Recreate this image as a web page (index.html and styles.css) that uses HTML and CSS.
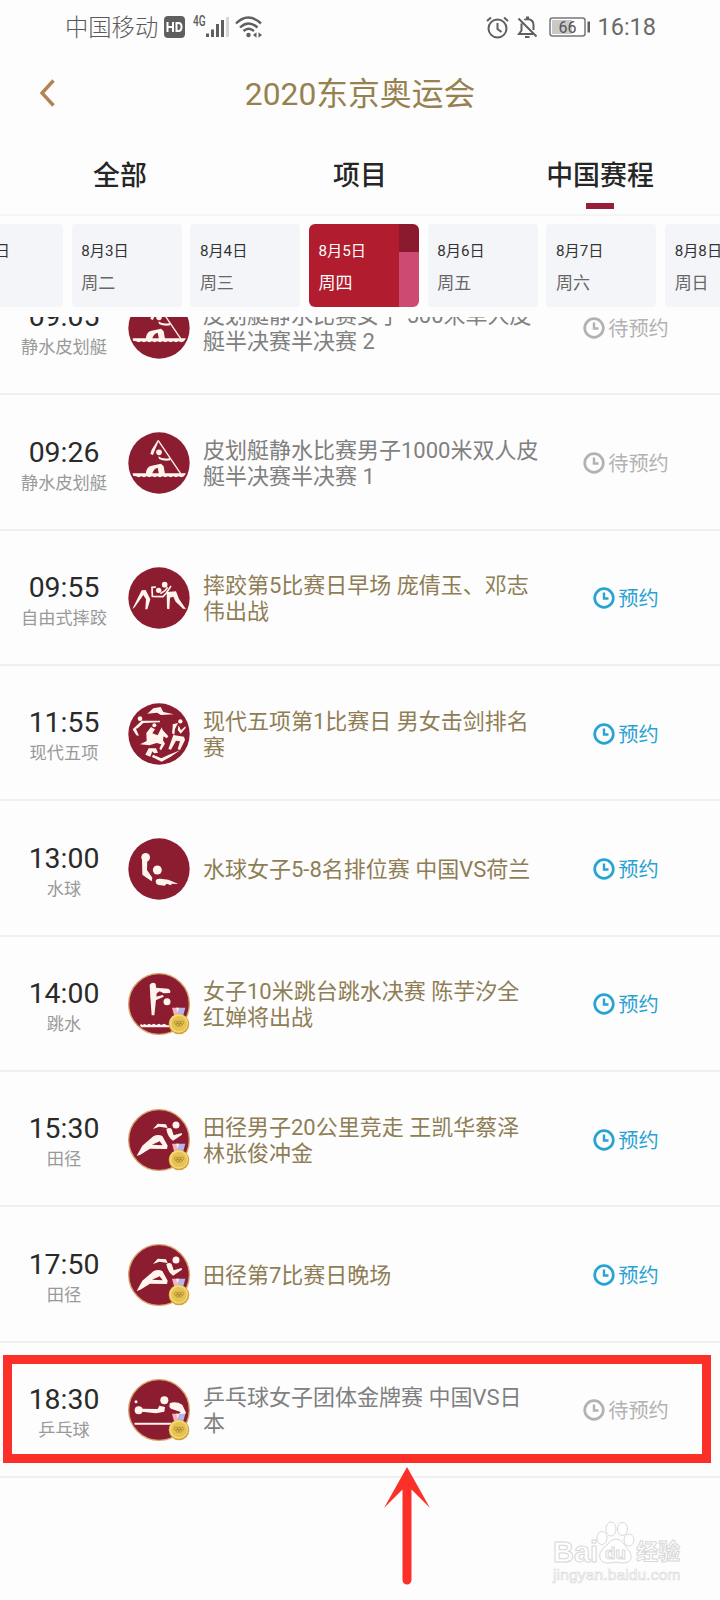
FILE: index.html
```html
<!DOCTYPE html>
<html lang="zh-CN">
<head>
<meta charset="utf-8">
<title>2020东京奥运会</title>
<link rel="stylesheet" href="styles.css">
</head>
<body>
<svg class="defs" width="0" height="0">
  <symbol id="clock" viewBox="0 0 22 22">
    <circle cx="11" cy="11" r="9.3" fill="none" stroke="currentColor" stroke-width="2.7"/>
    <path d="M11 5.5v6h4.500" fill="none" stroke="currentColor" stroke-width="2.400"/>
  </symbol>
  <symbol id="medal" viewBox="0 0 66 84">
    <path d="M12 2h22v22H18z" fill="#f2b3c0"/>
    <path d="M34 2h18l-6 22H28z" fill="#b3b8ea"/>
    <path d="M24 2h10l-6 14z" fill="#fbeef2"/>
    <circle cx="33" cy="51" r="31" fill="#d3a43c"/>
    <circle cx="32" cy="49" r="28" fill="#f3d978"/>
    <circle cx="33" cy="50" r="23" fill="#e6c253"/>
    <g fill="none" stroke="#a98630" stroke-width="2.2"><circle cx="24" cy="47" r="5"/><circle cx="33" cy="47" r="5"/><circle cx="42" cy="47" r="5"/><circle cx="29" cy="53" r="5"/><circle cx="37" cy="53" r="5"/></g>
  </symbol>
  <symbol id="canoe" viewBox="383 35 186 186">
    <circle cx="476" cy="128" r="92" fill="#8c1c2f"/>
    <path d="M474 61l67 99" stroke="#fff4ee" stroke-width="4"/>
    <path d="M476 60l-11 26-7 18-8-3 4-13 18-28z"/>
    <circle cx="476" cy="96" r="8.5"/>
    <path d="M474 108q14 10 34 5l2 7q-20 3-34-4z"/>
    <path d="M436 162q2-24 18-26l28-6 8 8 4 24h-18l-4-20q-12 2-17 20z"/>
    <path d="M397 159h160l-6 9-8 3-8-3-8 3-8-3-8 3-8-3-8 3-8-3-8 3-8-3-8 3-8-3-8 3-8-3-8 3-8-3-8 3-8-3-9-2z"/>
  </symbol>
  <symbol id="wrestling" viewBox="383 441 186 186">
    <circle cx="476" cy="534" r="92" fill="#8c1c2f"/>
    <path d="M396 567l28-56 12-1 14 28-9 30h-6l2-30-8-13-26 37z"/>
    <path d="M499 516l28-2 9 23 21 31-9-2-22-21-7-15-10 3-2 35-7-2z"/>
    <circle cx="493" cy="494" r="8.5"/><circle cx="475" cy="511" r="8"/>
    <path d="M467 501l-12 1 1 27 32 1 10-11 14-21M480 521l14-9 8-10" fill="none" stroke="#fff4ee" stroke-width="5"/>
  </symbol>
  <symbol id="pentathlon" viewBox="53 67 186 186">
    <circle cx="146" cy="160" r="92" fill="#8c1c2f"/>
    <path d="M111 99l18-16 22-4 8 15 32 7-39 2-12-7z"/>
    <circle cx="89" cy="114" r="7"/>
    <path d="M94 120h55v5l-50 2-15 14-7 4 9 20-8-1-11-18z"/>
    <circle cx="132" cy="134" r="6"/>
    <path d="M108 157l14-18 12 7-8 12 16 6 12-24 3 8 17 19-5 6-9-6-2 12 6 10-12 20-5-5 6-13-14-4-22 7-28-3 20-10z"/>
    <circle cx="210" cy="122" r="6.5"/>
    <path d="M187 131l16-4-9 18-2 17-7-4 2-18zM205 134l7 15 13-12 1 5-15 17-9-11zM189 163l32 5 3 10-15 30-7-2 7-24-12-2-15 27-8-2z"/>
    <path d="M115 203h22l6 13-12 2-5-6-6 16-15-6zM128 222l25 11 21-10 35-14-29 20-26 14-29-14z"/>
  </symbol>
  <symbol id="polo" viewBox="53 473 186 186">
    <circle cx="146" cy="566" r="92" fill="#8c1c2f"/>
    <circle cx="106" cy="531" r="13"/><circle cx="141" cy="569" r="13.5"/>
    <path d="M95 536l16 1-1 32 16 23-2 11-28-20z"/>
    <path d="M136 602q2-8 14-7l24 3 30 13-20-1-2 5-13-5-6 6-18-2q-9-2-9-12z"/>
  </symbol>
  <symbol id="diving" viewBox="53 68 186 186">
    <circle cx="146" cy="161" r="91" fill="#8c1c2f" stroke="#d9a26c" stroke-width="4"/>
    <circle cx="170" cy="154" r="10.5"/>
    <path d="M118 103q9-10 18-2l3 29-7 65h-8l-4-55z"/>
    <path d="M136 112l38 3q9 5 5 13l-19 1-12-6-12 8zM136 139l22-5 2 5-24 11z"/>
    <path d="M89 226l3-6 4 4 7-3 5 3 10-4 4 4 9-4 6 4 10-4 5 4 10-4 8 5h8v6H94z"/>
  </symbol>
  <symbol id="running" viewBox="53 71 186 186">
    <circle cx="146" cy="164" r="91" fill="#8c1c2f" stroke="#d9a26c" stroke-width="4"/>
    <circle cx="197" cy="119" r="10.5"/>
    <path d="M128 131l14-16 25 2 5 11-25-4z"/>
    <path d="M168 131q9-6 16 0l6 19 24-7 1 5-27 18q-16-10-20-35z"/>
    <path fill-rule="evenodd" d="M79 212l17-31 34-29q14-6 26 0l16 29-2 10-51-1-29 18zM125 178l32 2-9-12z"/>
  </symbol>
  <symbol id="pingpong" viewBox="53 477 186 186">
    <circle cx="146" cy="570" r="91" fill="#8c1c2f" stroke="#d9a26c" stroke-width="4"/>
    <circle cx="77" cy="545" r="4.5"/><circle cx="85" cy="571" r="12"/><circle cx="162" cy="541" r="12"/>
    <path d="M95 566l47 1 5-10 17 4-2 14-25 5-42-5z"/>
    <path d="M179 549q18-6 37 5l11 24-5 8-19-1 8-9-29-10q-8-5-3-17z"/>
    <path d="M72 608h112v6H73z"/>
  </symbol>
</svg>

<div class="screen">
  <header class="status">
    <div class="status-left">
      <span>中国移动</span>
      <svg class="hd" width="21" height="22" viewBox="0 0 21 22"><rect width="21" height="22" rx="4" fill="#5f5f5f"/><path d="M3.5 6v10M9 6v10M3.5 11H9M12.5 6v10M12.5 7h2q3 0 3 4t-3 4h-2" fill="none" stroke="#fff" stroke-width="2"/></svg>
      <span class="net">4G</span>
      <svg class="signal" width="24" height="20" viewBox="0 0 24 20"><g fill="#5f5f5f"><rect x="0" y="15.500" width="3" height="3.500"/><rect x="5" y="11.500" width="3" height="7.500"/><rect x="10" y="6" width="3" height="13"/><rect x="15" y="2" width="3" height="17"/></g><rect x="20" y="-1" width="3" height="20" fill="#d6d6d6"/></svg>
      <svg class="wifi" width="28" height="24" viewBox="0 0 28 24"><g fill="none" stroke="#5f5f5f" stroke-width="2.400"><path d="M1 8.500q12-12 25 0M5 12.500q8.500-8 17.500 0M8.500 16q5-4.500 10.500 0"/></g><circle cx="13.500" cy="20" r="2.200" fill="#5f5f5f"/><path d="M18 20l3.500-2.800v5.600zM27 20l-3.500-2.800v5.600z" fill="#5f5f5f"/></svg>
    </div>
    <div class="status-right">
      <svg width="23" height="23" viewBox="0 0 23 23" fill="none" stroke="#5f5f5f" stroke-width="2"><circle cx="11.500" cy="12.500" r="9"/><path d="M11.500 7v6l4 3M1 5l4-3.500M22 5l-4-3.500"/></svg>
      <svg class="bell" width="21" height="23" viewBox="0 0 21 23" fill="none" stroke="#5f5f5f" stroke-width="2"><path d="M1.500 2.500l18 18M4.500 7.500v7L2 18h14M7.500 4.200Q8 3 10.500 3 16.500 3.500 16.500 9v5M9 1.500h3M8 21h4.500"/></svg>
      <svg class="battery" width="42" height="20" viewBox="0 0 42 20"><rect x="1" y="1" width="35" height="18" rx="2.500" fill="#fff" stroke="#777" stroke-width="1.500"/><rect x="3" y="3" width="20" height="14" fill="#c9c9c9"/><rect x="38.500" y="4.500" width="2.500" height="11" fill="#5f5f5f"/><text x="18.500" y="15.500" text-anchor="middle" class="battery-text">66</text></svg>
      <span class="now">16:18</span>
    </div>
  </header>

  <div class="titlebar">
    <svg class="back" width="16" height="28" viewBox="0 0 16 28"><path d="M14.500 1.500L3 14l11.500 12.500" fill="none" stroke="#b08350" stroke-width="3.400"/></svg>
    <h1>2020东京奥运会</h1>
  </div>

  <nav class="tabs"><span>全部</span><span>项目</span><span class="current">中国赛程</span></nav>

  <div class="dates">
    <div class="date"><b>8月2日</b><i>周一</i></div>
    <div class="date"><b>8月3日</b><i>周二</i></div>
    <div class="date"><b>8月4日</b><i>周三</i></div>
    <div class="date selected"><b>8月5日</b><i>周四</i></div>
    <div class="date"><b>8月6日</b><i>周五</i></div>
    <div class="date"><b>8月7日</b><i>周六</i></div>
    <div class="date"><b>8月8日</b><i>周日</i></div>
  </div>

  <main class="list">
    <div class="rows">
      <section class="row wait"><div class="when"><time>09:05</time><small>静水皮划艇</small></div><div class="badge"><svg class="sport"><use href="#canoe"/></svg></div><p>皮划艇静水比赛女子 500米单人皮<br>艇半决赛半决赛 2</p><div class="action"><svg class="clock"><use href="#clock"/></svg>待预约</div></section>
      <section class="row wait"><div class="when"><time>09:26</time><small>静水皮划艇</small></div><div class="badge"><svg class="sport"><use href="#canoe"/></svg></div><p>皮划艇静水比赛男子1000米双人皮<br>艇半决赛半决赛 1</p><div class="action"><svg class="clock"><use href="#clock"/></svg>待预约</div></section>
      <section class="row"><div class="when"><time>09:55</time><small>自由式摔跤</small></div><div class="badge"><svg class="sport"><use href="#wrestling"/></svg></div><p>摔跤第5比赛日早场 庞倩玉、邓志<br>伟出战</p><div class="action"><svg class="clock"><use href="#clock"/></svg>预约</div></section>
      <section class="row"><div class="when"><time>11:55</time><small>现代五项</small></div><div class="badge"><svg class="sport"><use href="#pentathlon"/></svg></div><p>现代五项第1比赛日 男女击剑排名<br>赛</p><div class="action"><svg class="clock"><use href="#clock"/></svg>预约</div></section>
      <section class="row"><div class="when"><time>13:00</time><small>水球</small></div><div class="badge"><svg class="sport"><use href="#polo"/></svg></div><p>水球女子5-8名排位赛 中国VS荷兰</p><div class="action"><svg class="clock"><use href="#clock"/></svg>预约</div></section>
      <section class="row"><div class="when"><time>14:00</time><small>跳水</small></div><div class="badge"><svg class="sport"><use href="#diving"/></svg><svg class="medal"><use href="#medal"/></svg></div><p>女子10米跳台跳水决赛 陈芋汐全<br>红婵将出战</p><div class="action"><svg class="clock"><use href="#clock"/></svg>预约</div></section>
      <section class="row"><div class="when"><time>15:30</time><small>田径</small></div><div class="badge"><svg class="sport"><use href="#running"/></svg><svg class="medal"><use href="#medal"/></svg></div><p>田径男子20公里竞走 王凯华蔡泽<br>林张俊冲金</p><div class="action"><svg class="clock"><use href="#clock"/></svg>预约</div></section>
      <section class="row"><div class="when"><time>17:50</time><small>田径</small></div><div class="badge"><svg class="sport"><use href="#running"/></svg><svg class="medal"><use href="#medal"/></svg></div><p>田径第7比赛日晚场</p><div class="action"><svg class="clock"><use href="#clock"/></svg>预约</div></section>
      <section class="row wait"><div class="when"><time>18:30</time><small>乒乓球</small></div><div class="badge"><svg class="sport"><use href="#pingpong"/></svg><svg class="medal"><use href="#medal"/></svg></div><p>乒乓球女子团体金牌赛 中国VS日<br>本</p><div class="action"><svg class="clock"><use href="#clock"/></svg>待预约</div></section>
    </div>
  </main>

  <div class="frame"></div>
  <svg class="arrow" width="48" height="120" viewBox="0 0 48 120"><path d="M24 0L47 41 28.500 22.500V113a4.500 4.500 0 0 1-9 0V22.500L1 41z" fill="#fa3029"/></svg>
  <div class="watermark">
    <div class="mark-top"><span class="bai">Bai</span><svg width="40" height="44" viewBox="0 0 40 44" fill="#fff" stroke="#d8d8d8"><ellipse cx="6" cy="17" rx="5" ry="6.500"/><ellipse cx="15" cy="8" rx="5" ry="7"/><ellipse cx="26.500" cy="8" rx="5" ry="6.500"/><ellipse cx="33" cy="19" rx="5" ry="6"/><path d="M20 18q5 0 8 5t6 8q4 10-6 11-4 0-8-1-4 1-9 1-9-1-7-10 2-5 7-8 4-6 9-6z"/><text x="19.500" y="38" text-anchor="middle" class="du">du</text></svg><span class="jingyan">经验</span></div>
    <div class="mark-url">jingyan.baidu.com</div>
  </div>
</div>
</body>
</html>
```
FILE: styles.css
```css
* { box-sizing: border-box; }
body { margin: 0; background: #fdfdfd; font-family: Roboto, "Noto Sans CJK SC", sans-serif; }
.defs { position: absolute; }
.screen { position: relative; width: 720px; height: 1600px; overflow: hidden; display: flex; flex-direction: column; }

.status { height: 54px; padding: 0 64px 0 65px; display: flex; justify-content: space-between; color: #5a5a5a; font-size: 23.300px; font-weight: 300; line-height: 54px; }
.status-left, .status-right { display: flex; align-items: center; }
.status-left > span:first-child { padding-top: 2px; }
.hd { margin-left: 6px; }
.net { margin-left: 8px; font-size: 14px; line-height: 14px; font-weight: 500; transform: scaleX(.72); transform-origin: left; margin-top: -13px; }
.signal { margin-left: -5px; overflow: visible; margin-top: 2px; }
.wifi { margin-left: 5px; }
.status-right { position: relative; }
.bell { margin-left: 8px; }
.battery { margin-left: 11px; }
.battery-text { font-size: 16px; font-weight: 400; fill: #555; }
.now { margin-left: 6px; font-size: 23.500px; font-weight: 400; color: #6a6a6a; }

.titlebar { height: 80px; display: grid; grid-template-columns: 80px 1fr 80px; align-items: center; }
.back { margin-left: 39px; margin-top: -2px; }
h1 { margin: 0; text-align: center; font-size: 31.800px; font-weight: 400; line-height: 40px; color: #96814f; }

.tabs { height: 82px; border-bottom: 2px solid #f4f6f5; display: grid; grid-template-columns: repeat(3, 1fr); text-align: center; font-size: 26.900px; font-weight: 500; line-height: 85px; color: #262626; }
.tabs .current { display: flex; flex-direction: column; align-items: center; height: 75px; }
.current::after { content: ""; flex: none; width: 28px; height: 6px; margin-top: -16px; background: #972038; }

.dates { flex: none; height: 101px; padding-top: 8px; display: flex; gap: 8.700px; margin-left: -47px; }
.date { flex: none; width: 110px; height: 83px; border-radius: 4px; background: #f4f5f8; padding: 16px 0 0 9.500px; display: flex; flex-direction: column; gap: 10px; color: #333; }
.date b { font-size: 15.200px; font-weight: 400; line-height: 22px; white-space: nowrap; }
.date i { font-size: 17px; font-style: normal; line-height: 22px; color: #666; }
.selected { border-radius: 6px; color: #fff; background: linear-gradient(#8c1a2f, #8c1a2f) right top / 20px 28px no-repeat, linear-gradient(#cd4b73, #cd4b73) right bottom / 20px 55px no-repeat, #b11c2e; }
.selected i { color: #fff; }

.list { height: 1162px; overflow: hidden; }
.rows { margin-top: -57px; }
.row { height: 135.350px; border-bottom: 2px solid #f0f0f0; display: grid; grid-template-columns: 128px 75px 350px 147px; align-items: center; padding-top: 2px; }
.when { display: flex; flex-direction: column; align-items: center; padding-top: 4px; }
time { font-size: 28.400px; line-height: 35px; color: #2a2a2a; }
small { font-size: 17.200px; line-height: 26px; color: #999; }
.badge { position: relative; width: 62px; height: 62px; }
.sport { display: block; width: 62px; height: 62px; fill: #fff4ee; }
.medal { position: absolute; width: 22px; height: 28px; left: 40px; top: 34px; }
p { margin: 0; padding-top: 2px; font-size: 22px; line-height: 26px; color: #8f7d55; white-space: nowrap; }
.wait p { color: #808080; }
.action { display: flex; align-items: center; justify-content: center; gap: 3px; padding: 2px 1px 0 0; font-size: 20.200px; line-height: 28px; color: #29a3d4; }
.wait .action { color: #b2b2b4; }
.clock { width: 22px; height: 22px; margin-top: -2px; }

.frame { position: absolute; left: 3px; top: 1355px; width: 708px; height: 108px; border: 9px solid #fa3029; }
.arrow { position: absolute; left: 383px; top: 1467px; }
.watermark { position: absolute; left: 553px; top: 1521px; width: 130px; color: #fff; -webkit-text-stroke: 1px #d8d8d8; font-family: "Liberation Sans", "Noto Sans CJK SC", sans-serif; }
.mark-top { display: flex; align-items: flex-end; height: 44px; }
.mark-top svg { margin-left: -2px; }
.bai { font-size: 29px; font-weight: 700; line-height: 26px; }
.du { font-size: 17px; font-weight: 700; stroke-width: 1px; }
.jingyan { font-size: 22px; font-weight: 700; line-height: 26px; }
.mark-url { margin-top: 1px; font-size: 15.500px; line-height: 17px; letter-spacing: .15px; -webkit-text-stroke: .7px #dcdcdc; }
```
